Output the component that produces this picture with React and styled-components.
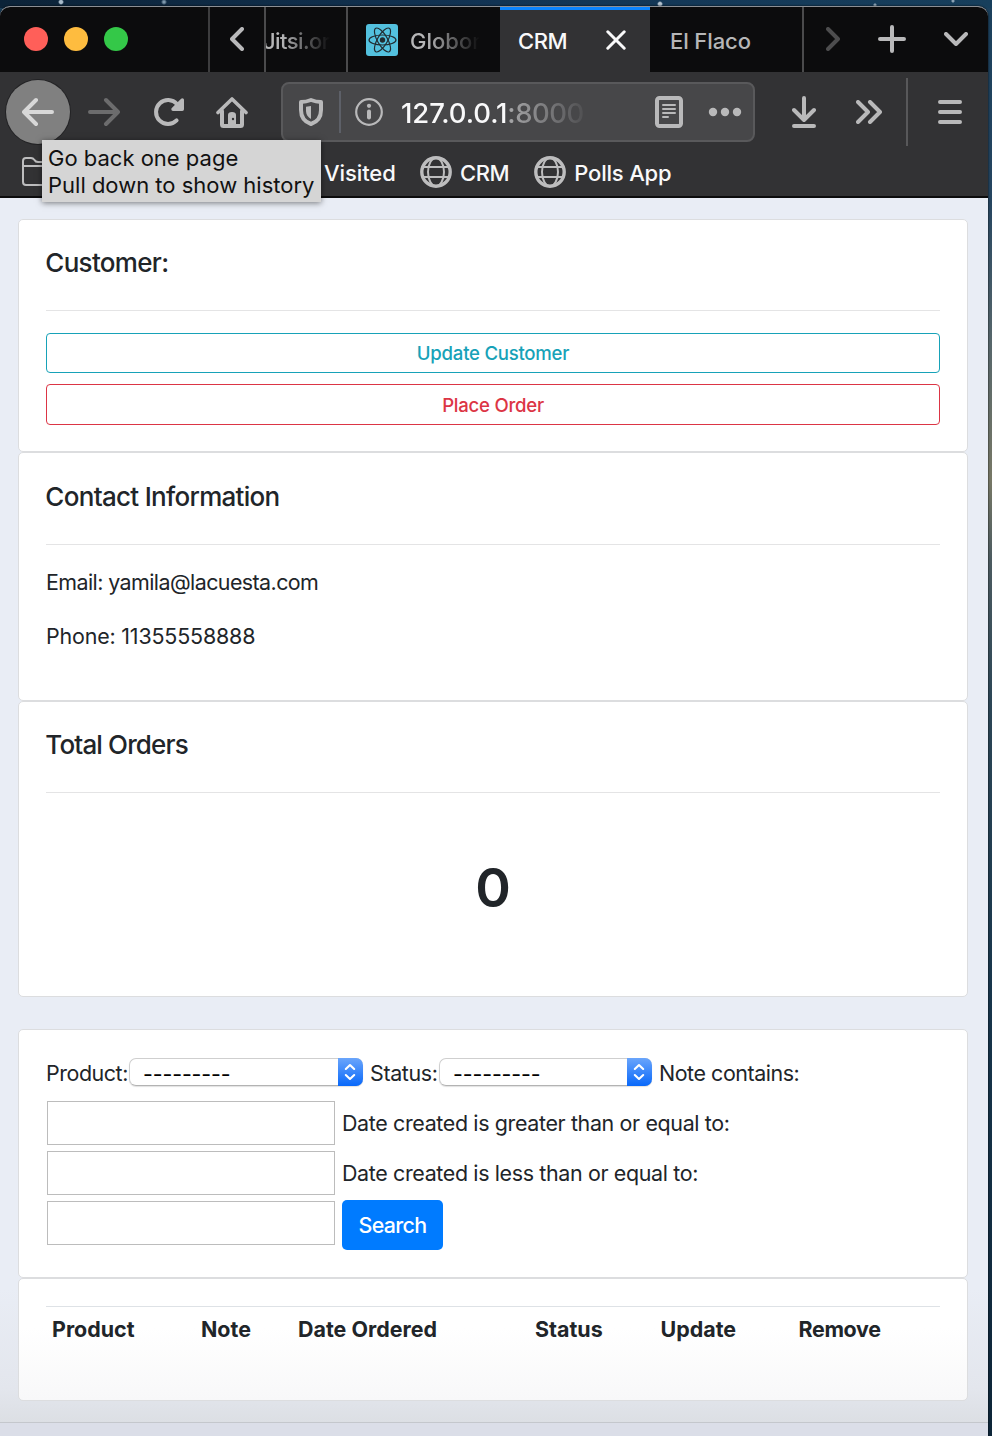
import React from "react";
import styled, { createGlobalStyle } from "styled-components";

const GlobalStyle = createGlobalStyle`
  *, *::before, *::after { box-sizing: border-box; }
  body {
    margin: 0;
    font-family: Inter, "Liberation Sans", sans-serif;
    font-size: 21.44px;
    line-height: 32px;
    color: #212529;
  }
  svg { flex: none; }
`;

const Desktop = styled.div`
  width: 992px;
  height: 1436px;
  padding-top: 6px;
  overflow: hidden;
  background:
    radial-gradient(circle at 61px 2px, #a9bccb 0 1.5px, transparent 3px),
    radial-gradient(circle at 164px 2px, #7d97ab 0 1px, transparent 3px),
    radial-gradient(circle at 660px 4px, #b4c3d0 0 1.5px, transparent 3px),
    radial-gradient(circle at 875px 5px, #8ba2b4 0 1px, transparent 2px),
    radial-gradient(circle at 953px 1px, #8ba2b4 0 1px, transparent 2px),
    linear-gradient(90deg, #0c2338, #123454 50%, #173f5c) 0 0 / 100% 8px no-repeat,
    linear-gradient(180deg, #1b405c 0, #254560 200px, #56666b 340px, #777866 480px, #4c5b60 560px, #2c4656 700px, #17354b 1000px, #0d2538 1436px);
`;

const Window = styled.div`
  width: 988px;
  height: 1430px;
  display: flex;
  flex-direction: column;
  border-top: 1px solid #8c8f94;
  border-radius: 10px 10px 0 0;
  overflow: hidden;
  background: #e9ecf5;
  box-shadow: 0 0 2px #000;
`;

const TabStrip = styled.div`
  display: flex;
  flex: none;
  height: 65px;
  overflow: hidden;
  background: #0c0c0d;
`;

const TrafficLights = styled.div`
  flex: none;
  width: 210px;
  padding: 0 0 1px 24px;
  display: flex;
  align-items: center;
  gap: 16px;
  border-right: 2px solid #3d3d3e;
`;

const Light = styled.span`
  width: 24px;
  height: 24px;
  border-radius: 50%;
  background: ${(p) => p.$color};
`;

const StripButton = styled.div`
  flex: none;
  width: ${(p) => p.$width}px;
  padding-bottom: 1px;
  display: flex;
  align-items: center;
  justify-content: center;
  color: ${(p) => (p.$dim ? "#4d4d4e" : "#b9b9ba")};
  border-right: ${(p) => (p.$divided ? "2px solid #4b4b4c" : "0")};
`;

const Tab = styled.div`
  flex: none;
  width: ${(p) => p.$width}px;
  padding: ${(p) => p.$pad || "3px 0 0 18px"};
  display: flex;
  align-items: center;
  overflow: hidden;
  color: ${(p) => (p.$active ? "#f9f9fa" : "#b6b6b7")};
  font-size: 22px;
  font-weight: ${(p) => (p.$active ? 500 : 450)};
  letter-spacing: ${(p) => p.$track || "0"};
  white-space: nowrap;
  background: ${(p) => (p.$active ? "#323234" : "transparent")};
  border-right: ${(p) => (p.$divided ? "2px solid #4b4b4c" : "0")};
  box-shadow: ${(p) => (p.$active ? "inset 0 3px 0 #0a84ff" : "none")};
`;

const FadedTitle = styled.span`
  width: ${(p) => p.$width}px;
  overflow: hidden;
  text-indent: ${(p) => p.$offset || 0}px;
  mask-image: linear-gradient(90deg, #000 25%, transparent 100%);
`;

const ReactBadge = styled.span`
  width: 32px;
  height: 32px;
  margin: -3px 12px 0 0;
  flex: none;
  display: flex;
  border-radius: 3px;
  background: #53c1de;
`;

const CloseSlot = styled.span`
  display: flex;
  margin: -3px 0 0 39px;
`;

const Toolbar = styled.div`
  display: flex;
  align-items: center;
  flex: none;
  height: 80px;
  padding: 0 0 0 6px;
  background: #323234;
  color: #b9b9ba;
`;

const BackButton = styled.div`
  position: relative;
  width: 64px;
  height: 64px;
  display: grid;
  place-items: center;
  border-radius: 50%;
  color: #d8d8d8;
  background: #808080;
  box-shadow: 0 0 0 1px #232325;
`;

const ToolButton = styled.div`
  flex: none;
  width: 64px;
  height: 64px;
  margin-left: ${(p) => p.$gap || 0}px;
  display: grid;
  place-items: center;
  color: ${(p) => (p.$disabled ? "#6c6c6d" : "inherit")};
`;

const Tooltip = styled.div`
  position: absolute;
  z-index: 2;
  left: 36px;
  top: 60px;
  width: 279px;
  height: 62px;
  padding: 5px 0 0 6px;
  color: #111;
  background: #d5d5d5;
  box-shadow: 0 1px 6px rgba(0, 0, 0, 0.5);
  font-size: 22px;
  line-height: 27px;
  letter-spacing: 0;
  white-space: nowrap;
`;

const AddressBar = styled.div`
  flex: none;
  display: flex;
  align-items: center;
  width: 474px;
  height: 60px;
  margin-left: 17px;
  padding: 0 12px 0 14px;
  border: 2px solid #59595b;
  border-radius: 8px;
  background: #474749;
`;

const BarDivider = styled.i`
  flex: none;
  width: 2px;
  height: 42px;
  margin: 0 12px 0 14px;
  background: #5d6068;
`;

const Address = styled.span`
  display: flex;
  flex: none;
  width: 184px;
  margin: 2px 70px 0 16px;
  color: #f9f9fa;
  font-size: 27.5px;
  font-weight: 450;
  letter-spacing: -0.1px;
  mask-image: linear-gradient(90deg, #000 60%, transparent 104%);
`;

const Port = styled.span`
  color: #a3a3a5;
  letter-spacing: -0.5px;
`;

const ToolDivider = styled.i`
  flex: none;
  width: 2px;
  height: 68px;
  margin: 0 10px 0 5px;
  background: #58585a;
`;

const Bookmarks = styled.div`
  display: flex;
  align-items: center;
  flex: none;
  height: 46px;
  padding: 0 0 4px 22px;
  color: #f9f9fa;
  background: #323234;
  border-bottom: 2px solid #0c0c0d;
  font-size: 22px;
  font-weight: 500;
`;

const FolderLabel = styled.span`
  width: 96px;
  margin-left: 268px;
  padding-top: 2px;
  letter-spacing: -0.1px;
`;

const Bookmark = styled.span`
  display: flex;
  align-items: center;
  gap: 8px;
  margin-right: 25px;
  letter-spacing: ${(p) => p.$track || "0"};
  span { padding-top: 2px; }
`;

const Page = styled.main`
  flex: 1;
  padding: 21px 20px 0 18px;
  background: linear-gradient(180deg, #e9edf5 0, #e9edf5 1090px, #e3e6ed 1190px, #dcdfe4 1224px);
`;

const Card = styled.section`
  height: ${(p) => p.$height}px;
  margin-bottom: ${(p) => p.$after || 0}px;
  padding: ${(p) => p.$top || 26}px 27px 0;
  border: 1px solid #dcdddf;
  border-radius: 5px;
  background: ${(p) => (p.$shaded ? "linear-gradient(#fff 40%, #f8f8f9)" : "#fff")};
`;

const CardTitle = styled.h5`
  margin: 0;
  padding-bottom: 31px;
  border-bottom: 1px solid #e4e4e5;
  font-size: 26px;
  line-height: 33px;
  font-weight: 540;
  text-indent: -0.7px;
  letter-spacing: ${(p) => p.$track || "-0.7px"};
`;

const OutlineButton = styled.a`
  display: flex;
  align-items: center;
  justify-content: center;
  height: ${(p) => p.$height}px;
  margin-top: ${(p) => p.$gap}px;
  padding-top: ${(p) => p.$drop || 0}px;
  border: 1px solid ${(p) => p.$color};
  border-radius: 4px;
  color: ${(p) => p.$color};
  font-size: 18.6px;
  font-weight: 450;
  letter-spacing: -0.26px;
`;

const Detail = styled.p`
  margin: ${(p) => p.$gap || 22}px 0 0;
  letter-spacing: ${(p) => p.$track};
`;

const OrderCount = styled.h1`
  margin: 62px 0 0;
  font-size: 54px;
  line-height: 65px;
  font-weight: 620;
  text-align: center;
`;

const FilterRow = styled.div`
  display: flex;
  align-items: center;
  height: 50px;
  letter-spacing: -0.36px;
  white-space: nowrap;
`;

const FilterForm = styled.form`
  margin-top: -8px;
`;

const FilterLabel = styled.label`
  width: ${(p) => p.$width || "auto"};
  letter-spacing: ${(p) => p.$track || "inherit"};
`;

const Picker = styled.div`
  display: flex;
  justify-content: space-between;
  width: ${(p) => p.$width}px;
  height: 28px;
  margin: -3px 7px 0 0;
  padding-left: 13px;
  border: 1px solid #cfcfcf;
  border-right: 0;
  border-bottom-color: #b3b3b3;
  border-radius: 7px;
  color: #000;
  letter-spacing: -0.14px;
  line-height: 30px;
  box-shadow: 0 1px 1px rgba(0, 0, 0, 0.12);
`;

const Stepper = styled.span`
  width: 25px;
  height: 28px;
  margin-top: -1px;
  padding-right: 1px;
  display: grid;
  place-items: center;
  border-radius: 0 7px 7px 0;
  background: linear-gradient(#6aa5fb, #0868fa);
`;

const TextInput = styled.input`
  width: 288px;
  height: 44px;
  margin: -1px 7px 0 1px;
  padding: 0 6px;
  border: 1px solid #bcbcbc;
  border-radius: 0;
  background: #fff;
  font: inherit;
`;

const SearchButton = styled.button`
  width: 101px;
  height: 50px;
  margin-top: 4px;
  padding: 0 0 1px;
  border: 0;
  border-radius: 5px;
  color: #fff;
  background: #007bff;
  font: inherit;
  font-weight: 450;
  letter-spacing: -0.7px;
`;

const OrdersHead = styled.div`
  display: grid;
  grid-template-columns: 149px 97px 237px 125.5px 138px 1fr;
  padding: 6px 0 0 6px;
  border-top: 1px solid #dee2e6;
  font-weight: 700;
  letter-spacing: 0;
`;

const HeadCell = styled.span`
  letter-spacing: ${(p) => p.$track || "inherit"};
`;

const BottomEdge = styled.footer`
  flex: none;
  height: 14px;
  border-top: 1px solid #c4c7cc;
  background: #dbdee8;
`;

const Svg = ({ w = 32, h = 32, sw = 4, children }) => (
  <svg
    width={w}
    height={h}
    viewBox={`0 0 ${w} ${h}`}
    fill="none"
    stroke="currentColor"
    strokeWidth={sw}
    strokeLinecap="round"
    strokeLinejoin="round"
  >
    {children}
  </svg>
);

const Globe = () => (
  <Svg sw={2}>
    <g stroke="#bdbdbe">
      <circle cx="16" cy="16" r="14.2" strokeWidth="3.4" />
      <ellipse cx="16" cy="16" rx="8" ry="14" />
      <path d="M3 11H29M3 21H29" />
    </g>
  </Svg>
);

const PickerField = ({ width }) => (
  <Picker $width={width}>
    ---------
    <Stepper>
      <svg width="12" height="18" viewBox="0 0 12 18" fill="none" stroke="#fff" strokeWidth="2.1" strokeLinecap="round" strokeLinejoin="round">
        <path d="M1.8 6L6 2L10.2 6M1.8 12L6 16L10.2 12" />
      </svg>
    </Stepper>
  </Picker>
);

export default function App() {
  return (
    <>
      <GlobalStyle />
      <Desktop>
        <Window>
          <TabStrip>
            <TrafficLights>
              <Light $color="#ff5f59" />
              <Light $color="#febc3f" />
              <Light $color="#34c848" />
            </TrafficLights>
            <StripButton $width={56} $divided>
              <Svg w={14} h={24}><path d="M12 2L2 12L12 22" /></Svg>
            </StripButton>
            <Tab $width={82} $pad="3px 0 0" $divided $track="-0.6px">
              <FadedTitle $width={64} $offset={-3}>Jitsi.or</FadedTitle>
            </Tab>
            <Tab $width={152}>
              <ReactBadge>
                <svg width="32" height="32" viewBox="0 0 32 32" fill="none" stroke="#222b30" strokeWidth="1.2">
                  <circle cx="16.5" cy="16" r="2.7" fill="#222b30" stroke="none" />
                  <ellipse cx="16.5" cy="16" rx="13.5" ry="5" />
                  <ellipse cx="16.5" cy="16" rx="13.5" ry="5" transform="rotate(60 16.5 16)" />
                  <ellipse cx="16.5" cy="16" rx="13.5" ry="5" transform="rotate(120 16.5 16)" />
                </svg>
              </ReactBadge>
              <FadedTitle $width={70}>Globom</FadedTitle>
            </Tab>
            <Tab $width={150} $active $track="-0.4px">
              CRM
              <CloseSlot>
                <Svg w={20} h={20} sw={3}><path d="M1.8 1.8L18.2 18.2M18.2 1.8L1.8 18.2" /></Svg>
              </CloseSlot>
            </Tab>
            <Tab $width={154} $divided $pad="3px 0 0 20px" $track="-0.1px">El Flaco</Tab>
            <StripButton $width={58} $dim>
              <Svg w={14} h={24}><path d="M2 2L12 12L2 22" /></Svg>
            </StripButton>
            <StripButton $width={60}>
              <Svg w={28} h={28}><path d="M14 2V26M2 14H26" /></Svg>
            </StripButton>
            <StripButton $width={68}>
              <Svg w={24} h={14}><path d="M2 2L12 12L22 2" /></Svg>
            </StripButton>
          </TabStrip>

          <Toolbar>
            <BackButton>
              <Svg><path d="M2 16H30M14 4L2 16L14 28" /></Svg>
              <Tooltip>
                Go back one page
                <br />
                Pull down to show history
              </Tooltip>
            </BackButton>
            <ToolButton $disabled $gap={2}>
              <Svg><path d="M2 16H30M18 4L30 16L18 28" /></Svg>
            </ToolButton>
            <ToolButton $gap={1}>
              <Svg>
                <path d="M23.6 24.4A12 12 0 1 1 24 8" />
                <path d="M29.3 4V13.2H20Z" fill="currentColor" strokeWidth="3.4" />
              </Svg>
            </ToolButton>
            <ToolButton $gap={-1}>
              <Svg>
                <path d="M2 16.5L16 3L30 16.5" strokeWidth="3.6" />
                <path d="M6 15V28.5Q6 30 7.5 30H24.5Q26 30 26 28.5V15" />
                <path d="M12 30V19Q12 16 16 16Q20 16 20 19V30Z" fill="currentColor" stroke="none" />
                <circle cx="17" cy="23" r="1.2" fill="#323234" stroke="none" />
              </Svg>
            </ToolButton>
            <AddressBar>
              <Svg w={28} h={32}>
                <path d="M14 4C10 5.6 7 6 4 6V14C4 21 8 26 14 28C20 26 24 21 24 14V6C21 6 18 5.6 14 4Z" />
                <path d="M14 10L9 10.8V15C9 18.5 11 21.5 14 23Z" fill="currentColor" stroke="none" />
              </Svg>
              <BarDivider />
              <Svg sw={2.2}>
                <circle cx="16" cy="16" r="12.8" />
                <path d="M16 15.5V21.5" strokeWidth="4" />
                <circle cx="16" cy="9.8" r="2.1" fill="currentColor" stroke="none" />
              </Svg>
              <Address>127.0.0.1<Port>:8000</Port></Address>
              <Svg w={28}>
                <rect x="2" y="2" width="24" height="28" rx="2.5" />
                <path d="M8 9H20M8 13H20M8 17H20M8 21H13" strokeWidth="2" />
              </Svg>
              <Svg w={60} h={10}>
                <g fill="currentColor" stroke="none">
                  <circle cx="30" cy="5" r="4.2" />
                  <circle cx="42" cy="5" r="4.2" />
                  <circle cx="54" cy="5" r="4.2" />
                </g>
              </Svg>
            </AddressBar>
            <ToolButton $gap={17}>
              <Svg w={24}><path d="M12 2V23M2 14L12 24L22 14M2 30H22" /></Svg>
            </ToolButton>
            <ToolButton $gap={1}>
              <Svg w={26} h={24}><path d="M2 2L12 12L2 22M14 2L24 12L14 22" /></Svg>
            </ToolButton>
            <ToolDivider />
            <ToolButton>
              <Svg w={24} h={24}><path d="M2 2H22M2 12H22M2 22H22" /></Svg>
            </ToolButton>
          </Toolbar>

          <Bookmarks>
            <Svg w={34} h={30} sw={2}>
              <path stroke="#bdbdbe" d="M1 25V4Q1 1 4 1H9Q11 1 12.5 3Q13.5 5 16 5H30Q33 5 33 8V25Q33 28 30 28H4Q1 28 1 25ZM1 9H33" />
            </Svg>
            <FolderLabel>Visited</FolderLabel>
            <Bookmark $track="-0.4px"><Globe /><span>CRM</span></Bookmark>
            <Bookmark $track="-0.2px"><Globe /><span>Polls App</span></Bookmark>
          </Bookmarks>

          <Page>
            <Card $height={233}>
              <CardTitle>Customer:</CardTitle>
              <OutlineButton $color="#17a2b8" $height={40} $gap={22}>Update Customer</OutlineButton>
              <OutlineButton $color="#dc3545" $height={41} $gap={11} $drop={1}>Place Order</OutlineButton>
            </Card>
            <Card $height={249} $top={27}>
              <CardTitle>Contact Information</CardTitle>
              <Detail $gap={21} $track="-0.58px">Email: yamila@lacuesta.com</Detail>
              <Detail $track="-0.18px">Phone: 11355558888</Detail>
            </Card>
            <Card $height={296} $after={32}>
              <CardTitle $track="-0.85px">Total Orders</CardTitle>
              <OrderCount>0</OrderCount>
            </Card>
            <Card $height={249}>
              <FilterForm>
                <FilterRow>
                  <FilterLabel $width="83px" $track="-0.45px">Product:</FilterLabel>
                  <PickerField width={234} />
                  <FilterLabel $width="69px">Status:</FilterLabel>
                  <PickerField width={213} />
                  <FilterLabel $track="-0.45px">Note contains:</FilterLabel>
                </FilterRow>
                <FilterRow>
                  <TextInput />
                  <FilterLabel>Date created is greater than or equal to:</FilterLabel>
                </FilterRow>
                <FilterRow>
                  <TextInput />
                  <FilterLabel>Date created is less than or equal to:</FilterLabel>
                </FilterRow>
                <FilterRow>
                  <TextInput />
                  <SearchButton type="button">Search</SearchButton>
                </FilterRow>
              </FilterForm>
            </Card>
            <Card $height={123} $top={27} $shaded>
              <OrdersHead>
                <HeadCell>Product</HeadCell>
                <HeadCell>Note</HeadCell>
                <HeadCell>Date Ordered</HeadCell>
                <HeadCell>Status</HeadCell>
                <HeadCell>Update</HeadCell>
                <HeadCell $track="-0.35px">Remove</HeadCell>
              </OrdersHead>
            </Card>
          </Page>
          <BottomEdge />
        </Window>
      </Desktop>
    </>
  );
}
